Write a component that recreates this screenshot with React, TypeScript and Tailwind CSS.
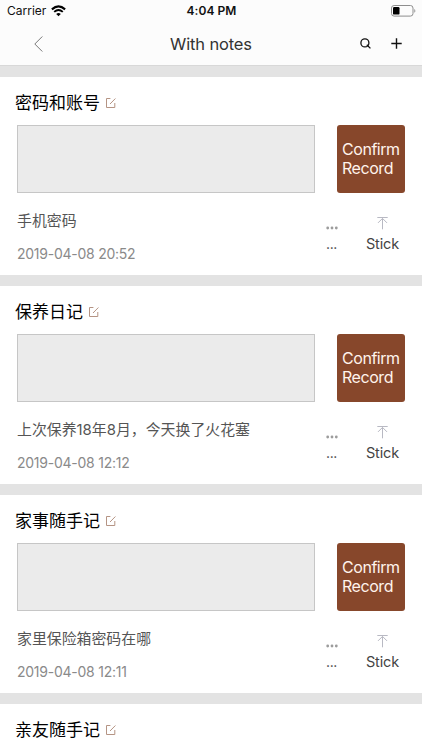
type Note = { title: string; text?: string; date?: string };

const notes: Note[] = [
  { title: '密码和账号', text: '手机密码', date: '2019-04-08 20:52' },
  { title: '保养日记', text: '上次保养18年8月，今天换了火花塞', date: '2019-04-08 12:12' },
  { title: '家事随手记', text: '家里保险箱密码在哪', date: '2019-04-08 12:11' },
  { title: '亲友随手记' },
];

function WifiIcon() {
  return (
    <svg className="ml-[5px]" width="15" height="12" viewBox="0 0 15 12" fill="none">
      <path d="M0.9 4.4Q7.5 -1.6 14.1 4.4" stroke="#000" strokeWidth="2.1" />
      <path d="M3.2 6.9Q7.5 3.1 11.8 6.9" stroke="#000" strokeWidth="1.9" />
      <path d="M5.2 8.9Q7.5 7 9.8 8.9L7.5 11.2Z" fill="#000" />
    </svg>
  );
}

function BatteryIcon() {
  return (
    <svg width="25" height="12" viewBox="0 0 25 12" fill="none">
      <rect x="0.5" y="0.5" width="21.5" height="10.6" rx="2.6" stroke="#8e8e8e" />
      <rect x="2" y="2" width="6.5" height="7.6" rx="1.2" fill="#000" />
      <path d="M23.3 4V7.8C24.7 7.2 24.7 4.6 23.3 4Z" fill="#8e8e8e" />
    </svg>
  );
}

function EditIcon() {
  return (
    <svg className="ml-[6px]" width="10" height="10" viewBox="0 0 10 10" fill="none" stroke="#b59484">
      <path d="M4.4 0.5H0.5V9.5H8.8V5M4 6L9.4 0.5" />
    </svg>
  );
}

function StickIcon() {
  return (
    <svg width="11" height="13" viewBox="0 0 11 13" fill="none" stroke="#b8b9c3">
      <path d="M0.3 0.5H10.7M5.5 1.5V12.3M1 5.9L5.5 1.4L10 5.9" />
    </svg>
  );
}

function MoreIcon() {
  return (
    <svg width="12" height="4" viewBox="0 0 12 4" fill="#9c9c9c">
      <circle cx="1.7" cy="2" r="1.4" />
      <circle cx="6" cy="2" r="1.4" />
      <circle cx="10.3" cy="2" r="1.4" />
    </svg>
  );
}

function NoteBody({ text, date }: { text?: string; date?: string }) {
  return (
    <>
      <div className="flex h-[68px] justify-between px-[17px]">
        <div className="w-[298px] border border-[#c6c6c6] bg-[#ebebeb]" />
        <button className="w-[68px] rounded-[3px] bg-[#87472b] pl-[5px] text-left text-[16px] leading-[19px] tracking-[-0.45px] text-[#fff3ec]">
          Confirm
          <br />
          Record
        </button>
      </div>
      <div className="flex pl-[17px]">
        <div className="w-[298px] pt-[17px]">
          <p className="h-[22px] text-[14.9px] leading-[22px] whitespace-nowrap text-[#555]">{text}</p>
          <p className="mt-[13px] text-[14px] leading-[18px] tracking-[-0.25px] text-[#8a8a8a]">{date}</p>
        </div>
        <div className="flex w-[33px] flex-col items-center pt-[33px]">
          <MoreIcon />
          <span className="mt-[4px] text-[14px] leading-[20px] tracking-[-0.4px] text-[#444]">...</span>
        </div>
        <div className="flex w-[69px] flex-col items-center pt-[24px]">
          <StickIcon />
          <span className="mt-[4px] text-[14.5px] leading-[20px] tracking-[-0.15px] text-[#444]">Stick</span>
        </div>
      </div>
    </>
  );
}

function NoteCard({ note }: { note: Note }) {
  return (
    <section className="mb-[11px] h-[198px] shrink-0 bg-white">
      <div className="flex h-[48px] items-center pt-[3px] pl-[15px]">
        <h2 className="text-[17px] leading-[24px] whitespace-nowrap text-black">{note.title}</h2>
        <EditIcon />
      </div>
      {note.text && <NoteBody text={note.text} date={note.date} />}
    </section>
  );
}

export default function App() {
  return (
    <div className="flex h-[750px] w-[422px] flex-col overflow-hidden bg-[#e3e3e3] font-['Inter','Noto_Sans_CJK_SC',sans-serif]">
      <header className="h-[66px] shrink-0 border-b border-[#d8d8d8] bg-[#fcfcfc]">
        <div className="grid h-[22px] grid-cols-3 items-center pr-[6px] pl-[7px] text-[12px] leading-[22px] text-[#111]">
          <div className="flex items-center">
            Carrier
            <WifiIcon />
          </div>
          <div className="text-center font-semibold tracking-[0.05px]">4:04 PM</div>
          <div className="flex justify-end">
            <BatteryIcon />
          </div>
        </div>
        <div className="grid h-[43px] grid-cols-3 items-center">
          <svg className="ml-[34px]" width="9" height="16" viewBox="0 0 9 16" fill="none" stroke="#777">
            <path d="M8.3 0.5L0.8 8L8.3 15.5" />
          </svg>
          <h1 className="text-center text-[16.5px] leading-[24px] tracking-[-0.15px] whitespace-nowrap text-[#333]">With notes</h1>
          <div className="flex items-center justify-end gap-[20px] pr-[20px]">
            <svg width="11" height="11" viewBox="0 0 11 11" fill="none" stroke="#111" strokeWidth="1.3">
              <circle cx="4.9" cy="4.9" r="4" />
              <path d="M6.8 6.8L10.4 10.4" />
            </svg>
            <svg width="11" height="11" viewBox="0 0 11 11" fill="none" stroke="#111" strokeWidth="1.4">
              <path d="M5.5 0.3V10.7M0.3 5.5H10.7" />
            </svg>
          </div>
        </div>
      </header>
      <main className="flex flex-col pt-[11px]">
        {notes.map((note) => (
          <NoteCard key={note.title} note={note} />
        ))}
      </main>
    </div>
  );
}
